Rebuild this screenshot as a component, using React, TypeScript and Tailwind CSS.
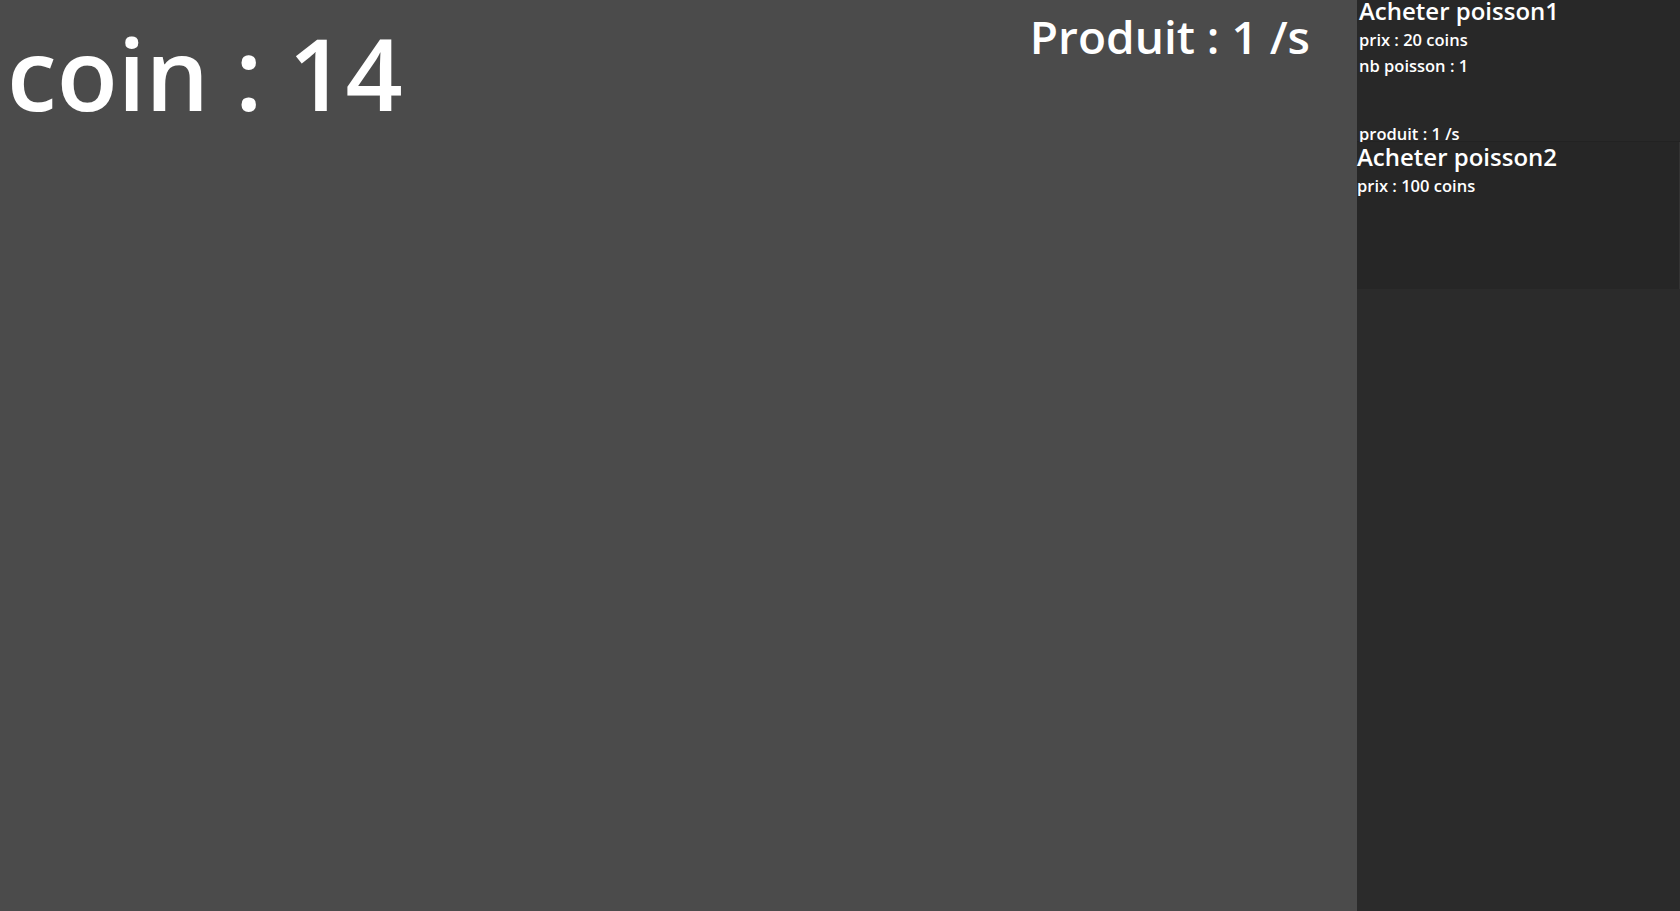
const shop = [
  { name: 'Acheter poisson1', prix: 20, nb: 1, produit: 1 },
  { name: 'Acheter poisson2', prix: 100 },
];

export default function App() {
  return (
    <div
      className="flex h-[911px] w-full overflow-hidden text-white"
      style={{ fontFamily: '"Open Sans", sans-serif' }}
    >
      <main className="flex flex-1 items-start justify-between bg-[#4b4b4b]">
        <h1 className="mt-[-3px] pl-[7px] text-[100px] font-semibold leading-normal">coin : 14</h1>
        <h2 className="mt-[2px] pr-[47px] text-[46px] font-semibold leading-normal">Produit : 1 /s</h2>
      </main>

      <aside className="flex w-[323px] flex-col bg-[#2b2b2b]">
        <div className="flex h-[142px] flex-col border-b border-[#222222] bg-[#282828] pl-[2px]">
          <p className="mt-[1px] text-[24px] font-semibold leading-[20px]">{shop[0].name}</p>
          <p className="mt-[5px] text-[16.5px] font-semibold leading-[27px]">prix : {shop[0].prix} coins</p>
          <p className="text-[16.5px] font-semibold leading-[26px]">nb poisson : {shop[0].nb}</p>
          <p className="mt-auto text-[16.5px] font-semibold leading-[14px]">produit : {shop[0].produit} /s</p>
        </div>
        <div className="flex h-[147px] flex-col border-r border-[#333333] bg-[#262626]">
          <p className="mt-[5px] text-[24px] font-semibold leading-[20px]">{shop[1].name}</p>
          <p className="mt-[5px] text-[16.5px] font-semibold leading-[27px]">prix : {shop[1].prix} coins</p>
        </div>
      </aside>
    </div>
  );
}
